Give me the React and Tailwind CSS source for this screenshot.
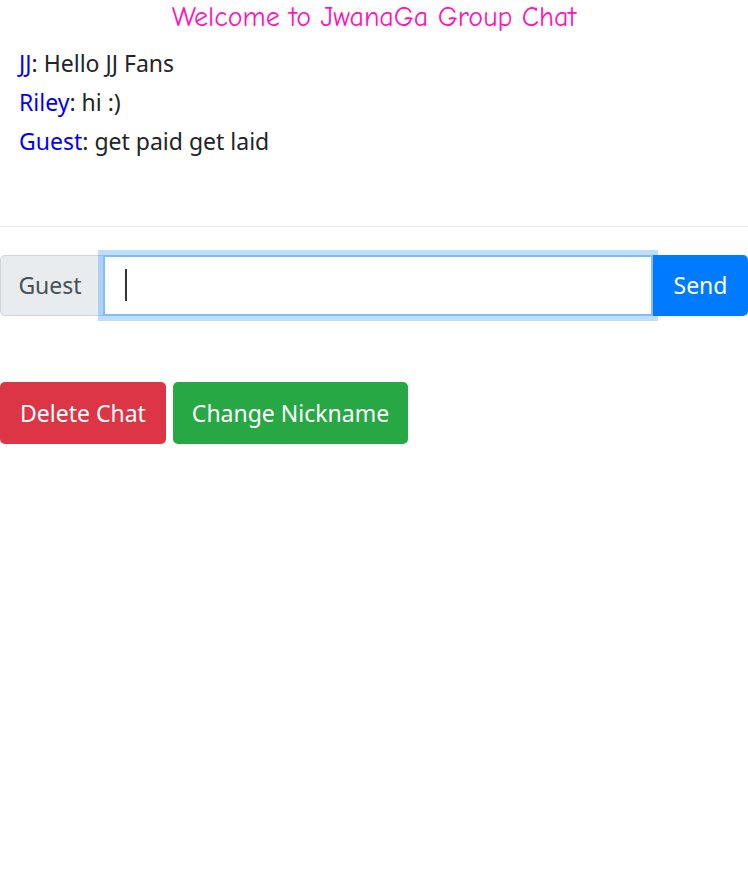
import { useState } from "react";

const messages = [
  { name: "JJ", text: "Hello JJ Fans" },
  { name: "Riley", text: "hi :)" },
  { name: "Guest", text: "get paid get laid" },
];

export default function App() {
  const [draft, setDraft] = useState("");

  return (
    <div className="min-h-[888px] bg-white text-[#212529] font-['Noto_Sans','Open_Sans',sans-serif]">
      <h1 className="pt-[1px] text-center text-[28px] leading-[32px] font-medium text-[#ff14b4] font-['Comic_Sans_MS','Comic_Neue',cursive]">
        Welcome to JwanaGa Group Chat
      </h1>

      <div className="mt-[15px] pl-[19px]">
        {messages.map((m, i) => (
          <p key={i} className="mb-[9px] text-[23px] leading-[30px]">
            <span className="text-[#0000ff]">{m.name}</span>: {m.text}
          </p>
        ))}
      </div>

      <hr className="mt-[70px] border-t border-[#e5e5e5]" />

      <div className="mt-[28px] flex h-[61px] items-stretch">
        <span className="flex w-[104px] shrink-0 items-center justify-center rounded-l-[5px] border border-[#ced4da] bg-[#e9ecef] pr-[4px] text-[23px] text-[#495057]">
          Guest
        </span>
        <div className="relative z-10 -ml-px flex-1">
          <input
            value={draft}
            onChange={(e) => setDraft(e.target.value)}
            className="h-full w-full border-2 border-[#80bdff] bg-white pl-[21px] text-[23px] caret-transparent shadow-[0_0_0_5px_rgba(0,123,255,0.25)] outline-none"
          />
          {draft === "" && (
            <span className="absolute left-[22px] top-[14px] h-[32px] w-[2px] bg-[#333]" />
          )}
        </div>
        <button className="relative z-20 w-[95px] shrink-0 rounded-r-[5px] bg-[#007bff] text-[23px] text-white">
          Send
        </button>
      </div>

      <div className="mt-[66px] flex gap-[7px]">
        <button className="h-[62px] w-[166px] rounded-[5px] bg-[#dc3545] text-[23px] text-white">
          Delete Chat
        </button>
        <button className="h-[62px] w-[235px] rounded-[5px] bg-[#28a745] text-[23px] text-white">
          Change Nickname
        </button>
      </div>
    </div>
  );
}
